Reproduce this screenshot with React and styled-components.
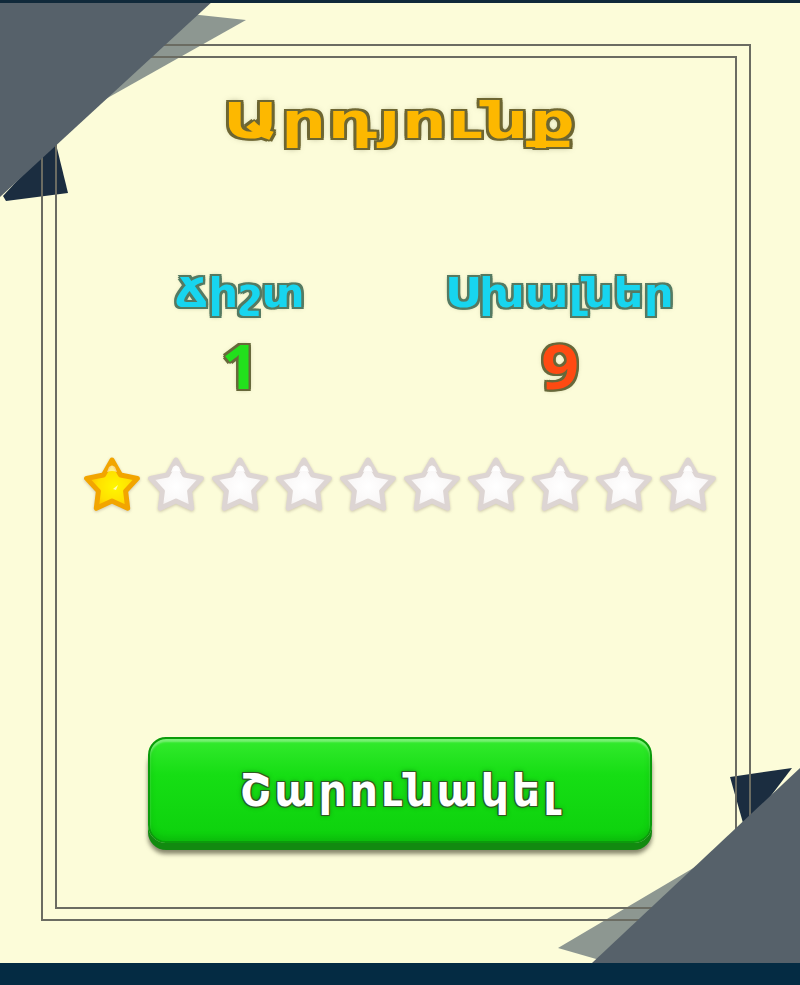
import React from "react";
import styled, { createGlobalStyle, css } from "styled-components";

const GlobalStyle = createGlobalStyle`
  html, body {
    margin: 0;
    padding: 0;
    background: #fcfcd9;
  }
  body {
    font-family: "DejaVu Sans", "Noto Sans", sans-serif;
  }
`;

// soft outline round the letters, the way the game font is drawn
const outline = (color, w = 2, glow = "rgba(70,70,30,0.55)") => css`
  text-shadow: ${-w}px ${-w}px 0 ${color}, ${w}px ${-w}px 0 ${color},
    ${-w}px ${w}px 0 ${color}, ${w}px ${w}px 0 ${color}, 0 ${-w}px 0 ${color},
    0 ${w}px 0 ${color}, ${-w}px 0 0 ${color}, ${w}px 0 0 ${color},
    0 0 5px ${glow};
`;

const Screen = styled.div`
  position: relative;
  z-index: 0;
  width: 800px;
  height: 985px;
  overflow: hidden;
  background: #fcfcd9;
  display: flex;
  flex-direction: column;
`;

const TopStrip = styled.div`
  position: relative;
  z-index: 3;
  height: 3px;
  flex-shrink: 0;
  background: #10293a;
`;

const BottomStrip = styled.div`
  position: relative;
  z-index: 3;
  height: 22px;
  flex-shrink: 0;
  background: #042b43;
`;

const Stage = styled.div`
  flex: 1;
  padding: 41px 49px 0 41px;
`;

const Decor = styled.svg`
  position: absolute;
  inset: 0;
  width: 800px;
  height: 985px;
  pointer-events: none;
  z-index: ${(p) => p.$layer};
`;

const OuterFrame = styled.div`
  position: relative;
  z-index: 1;
  box-sizing: border-box;
  height: 877px;
  border: 2px solid #6b6c62;
  padding: 10px 12px;
`;

const InnerFrame = styled.div`
  box-sizing: border-box;
  height: 100%;
  border: 2px solid #6b6c62;
  padding-left: 8px;
  display: flex;
  flex-direction: column;
  align-items: center;
`;

const Title = styled.h1`
  margin: 38px 0 0;
  font-size: 50px;
  line-height: 1;
  font-weight: bold;
  letter-spacing: 1.5px;
  color: #fdb800;
  transform: scaleX(1.38);
  ${outline("#6d6632", 2)}
`;

const Stats = styled.div`
  display: flex;
  margin-top: 127px;
`;

const StatColumn = styled.div`
  width: 320px;
  display: flex;
  flex-direction: column;
  align-items: center;
`;

const StatLabel = styled.div`
  font-size: 40px;
  line-height: 1;
  font-weight: bold;
  letter-spacing: 0.5px;
  color: #17d5ef;
  transform: scaleX(1.15);
  ${outline("#557a62", 2)}
`;

const StatValue = styled.div`
  margin-top: 23px;
  font-family: "Open Sans", "DejaVu Sans", sans-serif;
  font-size: 60px;
  line-height: 1;
  font-weight: bold;
  color: ${(p) => p.$color};
  transform: scaleX(1.1);
  ${outline("#67683a", 2)}
`;

const StarRow = styled.div`
  display: flex;
  gap: 2px;
  margin-top: 59px;
`;

const StarIcon = styled.svg`
  width: 62px;
  height: 62px;
  display: block;
  filter: drop-shadow(0 1px 1.5px rgba(120, 100, 90, 0.35));
`;

const ContinueButton = styled.button`
  margin-top: 220px;
  width: 504px;
  height: 106px;
  box-sizing: border-box;
  border: 2px solid #0b9c0b;
  border-radius: 18px;
  background: linear-gradient(#34ea2e 0%, #16de14 35%, #0dd10d 100%);
  box-shadow: inset 0 3px 2px rgba(255, 255, 255, 0.35),
    inset 0 -4px 6px rgba(0, 90, 0, 0.18), 0 7px 0 #128a10,
    0 11px 4px rgba(40, 40, 20, 0.55);
  font-family: "DejaVu Sans", "Noto Sans", sans-serif;
  font-size: 44px;
  font-weight: bold;
  letter-spacing: 3px;
  color: #ffffff;
  cursor: pointer;
  ${outline("#2f5a24", 1, "rgba(0,60,0,0.6)")}
`;

// plump five point star, corners rounded by the stroke
const STAR_PATH =
  "M31 5 L39.5 20 L56.4 23.4 L44.6 36.1 L46.7 53.3 L31 46 L15.3 53.3 L17.4 36.1 L5.6 23.4 L22.5 20 Z";

function Star({ filled, id }) {
  const g = `star-${id}`;
  return (
    <StarIcon viewBox="0 0 62 62">
      <defs>
        {filled ? (
          <radialGradient id={g} cx="55%" cy="55%" r="60%">
            <stop offset="0%" stopColor="#fff700" />
            <stop offset="55%" stopColor="#ffe000" />
            <stop offset="100%" stopColor="#ffac00" />
          </radialGradient>
        ) : (
          <radialGradient id={g} cx="50%" cy="55%" r="60%">
            <stop offset="0%" stopColor="#ffffff" />
            <stop offset="60%" stopColor="#f9f7f7" />
            <stop offset="100%" stopColor="#e6dedc" />
          </radialGradient>
        )}
      </defs>
      <path
        d={STAR_PATH}
        fill={`url(#${g})`}
        stroke={filled ? "#f2a500" : "#ddd5d3"}
        strokeWidth="5"
        strokeLinejoin="round"
      />
      <path
        d="M28 12 Q31 9 34 12 L36 17 Q31 15 26 17 Z"
        fill="#ffffff"
        opacity={filled ? 0.55 : 0.9}
      />
      {filled && (
        <path d="M32 34 L37 30 L35 35 Z" fill="#ffffff" opacity="0.7" />
      )}
    </StarIcon>
  );
}

function App() {
  const correct = 1;
  const total = 10;
  const stars = Array.from({ length: total }, (_, i) => i < correct);

  return (
    <Screen>
      <GlobalStyle />
      <Decor $layer={0} viewBox="0 0 800 985">
        <polygon points="55,140 68,193 6,201 3,196" fill="#1b2d40" />
        <polygon points="190,14 246,20 95,105" fill="#8d9791" />
        <polygon points="730,777 792,768 745,830" fill="#1b2d40" />
        <polygon points="558,948 712,857 610,963" fill="#8d9791" />
      </Decor>
      <Decor $layer={2} viewBox="0 0 800 985">
        <polygon points="0,0 214,0 0,197" fill="#56616a" />
        <polygon points="800,768 800,963 592,963" fill="#56616a" />
      </Decor>
      <TopStrip />
      <Stage>
        <OuterFrame>
          <InnerFrame>
            <Title>Արդյունք</Title>
            <Stats>
              <StatColumn>
                <StatLabel>Ճիշտ</StatLabel>
                <StatValue $color="#22e01c">{correct}</StatValue>
              </StatColumn>
              <StatColumn>
                <StatLabel>Սխալներ</StatLabel>
                <StatValue $color="#ff4a12">{total - correct}</StatValue>
              </StatColumn>
            </Stats>
            <StarRow>
              {stars.map((f, i) => (
                <Star key={i} id={i} filled={f} />
              ))}
            </StarRow>
            <ContinueButton>Շարունակել</ContinueButton>
          </InnerFrame>
        </OuterFrame>
      </Stage>
      <BottomStrip />
    </Screen>
  );
}

export default App;
